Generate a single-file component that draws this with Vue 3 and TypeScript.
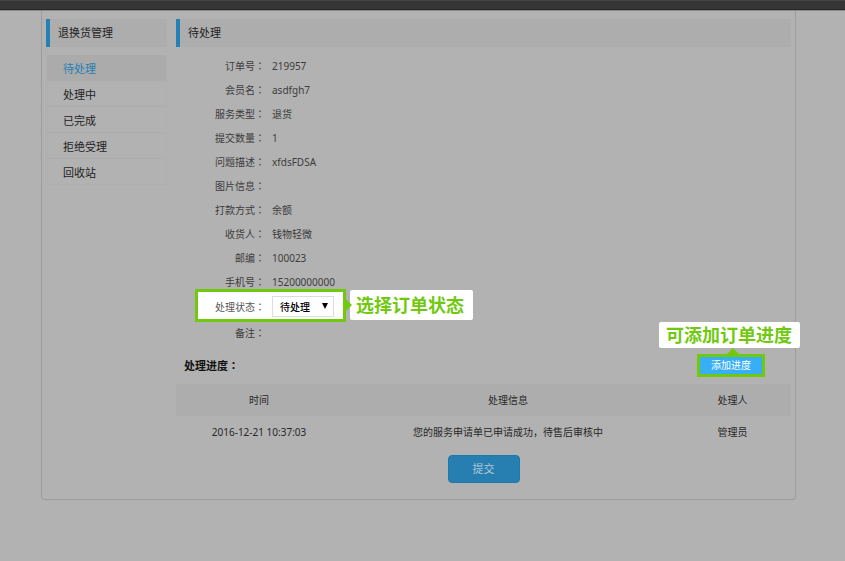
<script setup lang="ts">
import { ref } from 'vue'

interface Field {
  label: string
  value: string
}

interface Progress {
  time: string
  info: string
  handler: string
}

const menu: string[] = ['待处理', '处理中', '已完成', '拒绝受理', '回收站']
const active = ref<string>('待处理')
const status = ref<string>('待处理')

const fields: Field[] = [
  { label: '订单号', value: '219957' },
  { label: '会员名', value: 'asdfgh7' },
  { label: '服务类型', value: '退货' },
  { label: '提交数量', value: '1' },
  { label: '问题描述', value: 'xfdsFDSA' },
  { label: '图片信息', value: '' },
  { label: '打款方式', value: '余额' },
  { label: '收货人', value: '钱物轻微' },
  { label: '邮编', value: '100023' },
  { label: '手机号', value: '15200000000' },
]

const progress: Progress[] = [
  { time: '2016-12-21 10:37:03', info: '您的服务申请单已申请成功，待售后审核中', handler: '管理员' },
]
</script>

<template>
  <div class="page" lang="zh-CN">
    <header class="topbar"></header>
    <div class="panel">
      <aside class="sidebar">
        <h2 class="title">退换货管理</h2>
        <nav class="menu">
          <a
            v-for="item in menu"
            :key="item"
            href="#"
            class="menu-item"
            :class="{ active: item === active }"
            @click.prevent="active = item"
          >{{ item }}</a>
        </nav>
      </aside>

      <main class="content">
        <h2 class="title">待处理</h2>

        <dl class="fields">
          <div v-for="field in fields" :key="field.label" class="field">
            <dt>{{ field.label }}<span class="colon" lang="zh-TW">：</span></dt>
            <dd>{{ field.value }}</dd>
          </div>
        </dl>

        <div class="status-box">
          <label class="status-label" for="status">处理状态<span class="colon" lang="zh-TW">：</span></label>
          <div class="select-wrap">
            <select id="status" v-model="status">
              <option>待处理</option>
              <option>处理中</option>
              <option>已完成</option>
            </select>
            <svg class="arrow" viewBox="0 0 6 6" aria-hidden="true"><path d="M0 0H6L3 6Z" /></svg>
          </div>
          <svg class="pointer-right" viewBox="0 0 7 14" aria-hidden="true"><path d="M0 0L7 7L0 14Z" /></svg>
          <span class="callout callout-right">选择订单状态</span>
        </div>

        <div class="field remark">
          <span class="field-label">备注<span class="colon" lang="zh-TW">：</span></span>
        </div>

        <div class="progress-head">
          <h3>处理进度<span class="colon" lang="zh-TW">：</span></h3>
          <div class="add-box">
            <span class="callout callout-top">可添加订单进度</span>
            <svg class="pointer-up" viewBox="0 0 12 6" aria-hidden="true"><path d="M0 6L6 0L12 6Z" /></svg>
            <button type="button" class="add">添加进度</button>
          </div>
        </div>

        <table class="log">
          <thead>
            <tr>
              <th class="col-time">时间</th>
              <th class="col-info">处理信息</th>
              <th>处理人</th>
            </tr>
          </thead>
          <tbody>
            <tr v-for="row in progress" :key="row.time">
              <td>{{ row.time }}</td>
              <td>{{ row.info }}</td>
              <td>{{ row.handler }}</td>
            </tr>
          </tbody>
        </table>

        <button type="button" class="submit">提交</button>
      </main>
    </div>
  </div>
</template>

<style>
body {
  margin: 0;
  background: #b2b2b2;
}
</style>

<style scoped>
.page {
  font-family: "Noto Sans", "Noto Sans CJK SC", sans-serif;
  font-size: 10px;
  line-height: 24px;
  color: #3c3c3c;
}

.topbar {
  box-sizing: border-box;
  height: 11px;
  background: #363636;
  border-top: 1px solid #444;
  border-bottom: 1px solid #8a8a8a;
  box-shadow: inset 0 -1px #262626;
}

.panel {
  display: flex;
  gap: 9px;
  margin: 0 49px 0 41px;
  padding: 8px 4px 16px;
  border: 1px solid #9c9c9c;
  border-top: 0;
  border-radius: 0 0 4px 4px;
}

.sidebar {
  flex: 0 0 121px;
}

.content {
  flex: 1;
  min-width: 0;
}

.title {
  margin: 0;
  padding-left: 8px;
  border-left: 4px solid #2480b5;
  background: #adadad;
  font-size: 11px;
  line-height: 28px;
  font-weight: 400;
  color: #222;
}

.menu {
  display: flex;
  flex-direction: column;
  padding-top: 8px;
  border: 1px solid #afafaf;
  border-top: 0;
}

.menu-item {
  padding: 2px 0 0 16px;
  border-bottom: 1px solid #adadad;
  font-size: 11px;
  line-height: 23px;
  color: #1e1e1e;
  text-decoration: none;
}

.menu-item:last-child {
  border-bottom: 0;
}

.menu-item.active {
  background: #ababab;
  color: #2480b5;
}

.fields {
  margin: 7px 0 0;
}

.field {
  display: flex;
  gap: 7px;
  height: 24px;
}

.field dt,
.field-label {
  flex: 0 0 89px;
  text-align: right;
}

.field dd {
  margin: 0;
}

.colon {
  font-family: "Noto Sans CJK TC", sans-serif;
}

.status-box {
  position: relative;
  box-sizing: border-box;
  display: flex;
  align-items: center;
  gap: 7px;
  width: 151px;
  height: 33px;
  margin: -5px 0 0 19px;
  padding-top: 2px;
  border: 3px solid #70c90f;
  background: #fff;
}

.status-label {
  flex: 0 0 67px;
  text-align: right;
  color: #555;
}

.select-wrap {
  position: relative;
  display: flex;
}

select {
  appearance: none;
  box-sizing: border-box;
  width: 62px;
  height: 21px;
  margin: 0;
  padding: 0 16px 0 7px;
  border: 1px solid #ddd;
  border-radius: 0;
  background: #fff;
  font-family: inherit;
  font-size: 10px;
  font-weight: 500;
  color: #000;
}

.arrow {
  position: absolute;
  top: 7px;
  right: 6px;
  width: 6px;
  height: 6px;
  pointer-events: none;
}

.pointer-right,
.pointer-up {
  position: absolute;
  fill: #70c90f;
}

.pointer-right {
  z-index: 1;
  top: 6px;
  left: 147px;
  width: 7px;
  height: 14px;
}

.callout {
  position: absolute;
  border-radius: 2px;
  background: #fff;
  font-size: 18px;
  font-weight: 700;
  color: #70c90f;
  white-space: nowrap;
}

.callout-right {
  top: -2px;
  left: 152px;
  padding: 0 9px 0 6px;
  line-height: 30px;
}

.callout-top {
  right: -38px;
  bottom: 26px;
  padding: 0 8px 0 7px;
  line-height: 26px;
}

.remark {
  margin-top: -1px;
}

.progress-head {
  display: flex;
  justify-content: space-between;
  align-items: center;
  margin: 8px 26px 6px 8px;
}

.progress-head h3 {
  margin: 0;
  font-size: 11px;
  font-weight: 700;
  color: #111;
}

.add-box {
  position: relative;
  display: flex;
  border: 3px solid #70c90f;
}

.pointer-up {
  top: -9px;
  left: 27px;
  width: 12px;
  height: 6px;
}

button {
  margin: 0;
  border: 0;
  font-family: inherit;
  cursor: pointer;
}

.add {
  padding: 0 11px;
  background: #38aff5;
  font-size: 10px;
  line-height: 17px;
  color: #fff;
}

.log {
  width: 100%;
  table-layout: fixed;
  border-collapse: collapse;
  text-align: center;
  color: #282828;
}

.log th,
.log td {
  padding: 0;
  font-weight: 400;
  line-height: 32px;
}

.log th {
  background: #adadad;
}

.col-time {
  width: 27%;
}

.col-info {
  width: 54%;
}

.submit {
  display: block;
  width: 72px;
  margin: 7px auto 0;
  padding: 0;
  border: 1px solid #1c79ae;
  border-radius: 4px;
  background: #277eb0;
  font-size: 11px;
  line-height: 26px;
  color: #b2c8d6;
}
</style>
